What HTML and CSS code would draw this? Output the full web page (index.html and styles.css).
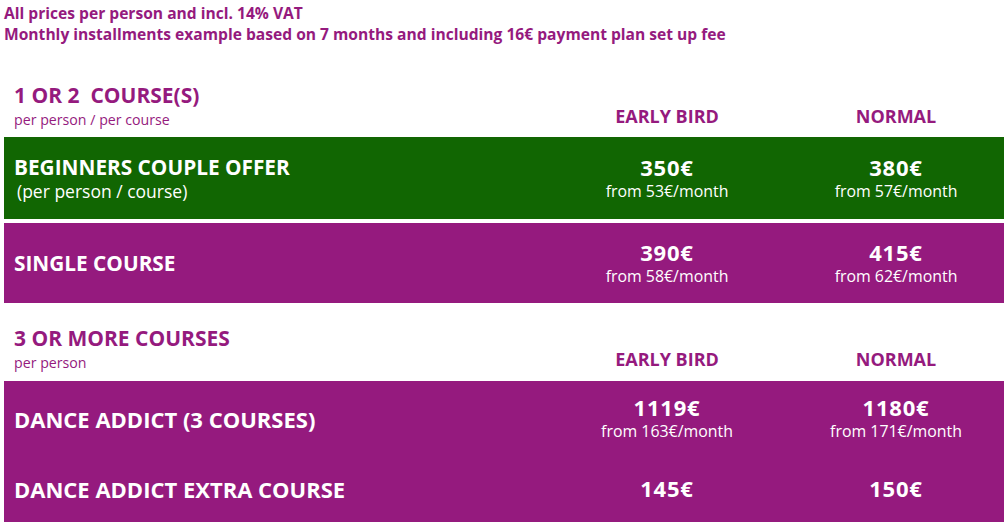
FILE: index.html
```html
<!DOCTYPE html>
<html lang="en">
<head>
<meta charset="utf-8">
<title>Prices</title>
<link rel="stylesheet" href="styles.css">
</head>
<body>
<div class="notes">
  <p>All prices per person and incl. 14% VAT</p>
  <p>Monthly installments example based on 7 months and including 16€ payment plan set up fee</p>
</div>

<section class="section first">
  <div class="head">
    <div class="head-title">
      <h2>1 OR 2&nbsp; COURSE(S)</h2>
      <div class="head-sub">per person / per course</div>
    </div>
    <div class="col-head">EARLY BIRD</div>
    <div class="col-head normal">NORMAL</div>
  </div>
  <div class="row green">
    <div class="label">
      <div class="name">BEGINNERS COUPLE OFFER</div>
      <div class="name-sub">(per person / course)</div>
    </div>
    <div class="price"><div class="amount">350€</div><div class="monthly">from 53€/month</div></div>
    <div class="price normal"><div class="amount">380€</div><div class="monthly">from 57€/month</div></div>
  </div>
  <div class="row purple">
    <div class="label"><div class="name">SINGLE COURSE</div></div>
    <div class="price"><div class="amount">390€</div><div class="monthly">from 58€/month</div></div>
    <div class="price normal"><div class="amount">415€</div><div class="monthly">from 62€/month</div></div>
  </div>
</section>

<section class="section second">
  <div class="head">
    <div class="head-title">
      <h2>3 OR MORE COURSES</h2>
      <div class="head-sub">per person</div>
    </div>
    <div class="col-head">EARLY BIRD</div>
    <div class="col-head normal">NORMAL</div>
  </div>
  <div class="block purple">
    <div class="row tall">
      <div class="label"><div class="name big">DANCE ADDICT (3 COURSES)</div></div>
      <div class="price"><div class="amount">1119€</div><div class="monthly">from 163€/month</div></div>
      <div class="price normal"><div class="amount">1180€</div><div class="monthly">from 171€/month</div></div>
    </div>
    <div class="row short">
      <div class="label"><div class="name big">DANCE ADDICT EXTRA COURSE</div></div>
      <div class="price"><div class="amount">145€</div></div>
      <div class="price normal"><div class="amount">150€</div></div>
    </div>
  </div>
</section>
</body>
</html>
```
FILE: styles.css
```css
* { box-sizing: border-box; }
html, body { margin: 0; padding: 0; background: #fff; }
body {
  width: 1004px;
  height: 522px;
  overflow: hidden;
  font-family: "Open Sans", "DejaVu Sans", sans-serif;
  color: #951a7e;
}
p { margin: 0; }

.notes {
  padding: 3px 0 0 4px;
  font-family: "Open Sans", sans-serif;
  font-weight: 700;
  font-size: 15.6px;
  line-height: 21px;
}

.section { padding-left: 4px; }

.head {
  display: grid;
  grid-template-columns: 548px 230px 222px;
  align-items: end;
}
.first .head { padding-top: 37px; }
.second .head { padding-top: 22px; }

.head-title { padding: 0 0 8px 10px; }
.second .head-title { padding-bottom: 9px; }
h2 {
  margin: 0;
  font-size: 21px;
  line-height: 26px;
  font-weight: 700;
}
.head-sub {
  margin-top: 3px;
  font-size: 14.2px;
  line-height: 18px;
}
.col-head {
  text-align: center;
  font-weight: 700;
  font-size: 18px;
  line-height: 20px;
  padding-bottom: 11px;
}
.second .col-head { padding-bottom: 12px; }
.normal { padding-left: 6px; }

.row {
  display: grid;
  grid-template-columns: 548px 230px 222px;
  align-items: center;
  color: #fff;
}
.green { background: #116602; height: 82px; }
.first .purple { background: #951a7e; height: 80px; margin-top: 4px; }
.block { background: #951a7e; }
.block.purple { height: 141px; }
.tall { height: 80px; padding-bottom: 5px; }
.short { height: 61px; padding-bottom: 6px; }

.label { padding-left: 10px; }
.name {
  font-weight: 700;
  font-size: 20.8px;
  line-height: 26px;
}
.name.big { font-size: 22px; }
.name-sub {
  font-size: 17.5px;
  line-height: 22px;
  padding-left: 3px;
}
.price { text-align: center; }
.amount {
  font-weight: 700;
  font-size: 22px;
  letter-spacing: 0.8px;
  line-height: 25px;
}
.monthly {
  font-size: 15.9px;
  line-height: 22px;
}
```
